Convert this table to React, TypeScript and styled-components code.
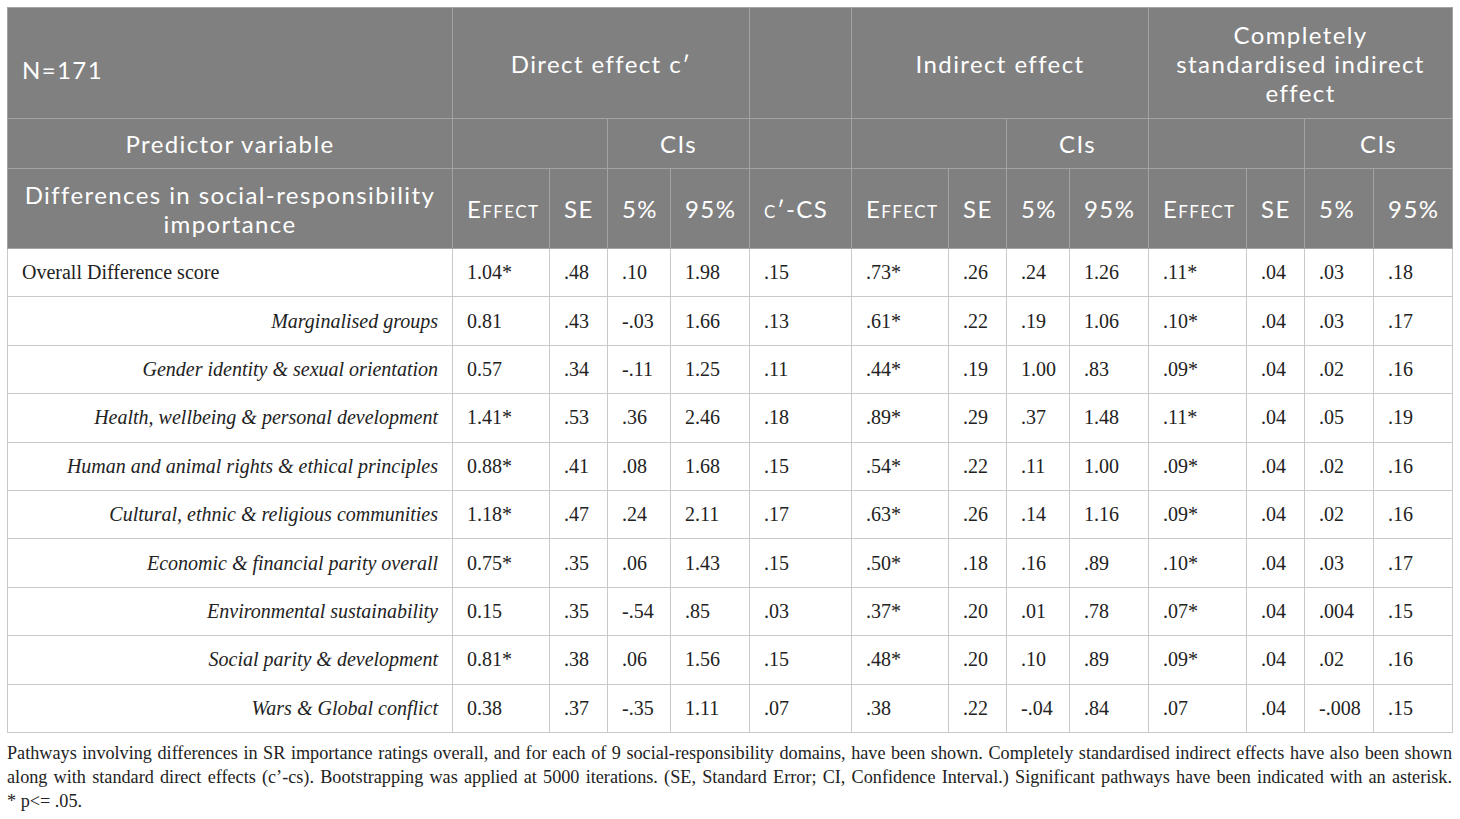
import React from 'react';
import styled, { createGlobalStyle } from 'styled-components';

const GlobalStyle = createGlobalStyle`
  body {
    margin: 0;
    background: #ffffff;
  }
`;

type Row = { label: string; sub: boolean; values: string[] };

const rows: Row[] = [
    { label: 'Overall Difference score', sub: false, values: ['1.04*', '.48', '.10', '1.98', '.15', '.73*', '.26', '.24', '1.26', '.11*', '.04', '.03', '.18'] },
    { label: 'Marginalised groups', sub: true, values: ['0.81', '.43', '-.03', '1.66', '.13', '.61*', '.22', '.19', '1.06', '.10*', '.04', '.03', '.17'] },
    { label: 'Gender identity & sexual orientation', sub: true, values: ['0.57', '.34', '-.11', '1.25', '.11', '.44*', '.19', '1.00', '.83', '.09*', '.04', '.02', '.16'] },
    { label: 'Health, wellbeing & personal development', sub: true, values: ['1.41*', '.53', '.36', '2.46', '.18', '.89*', '.29', '.37', '1.48', '.11*', '.04', '.05', '.19'] },
    { label: 'Human and animal rights & ethical principles', sub: true, values: ['0.88*', '.41', '.08', '1.68', '.15', '.54*', '.22', '.11', '1.00', '.09*', '.04', '.02', '.16'] },
    { label: 'Cultural, ethnic & religious communities', sub: true, values: ['1.18*', '.47', '.24', '2.11', '.17', '.63*', '.26', '.14', '1.16', '.09*', '.04', '.02', '.16'] },
    { label: 'Economic & financial parity overall', sub: true, values: ['0.75*', '.35', '.06', '1.43', '.15', '.50*', '.18', '.16', '.89', '.10*', '.04', '.03', '.17'] },
    { label: 'Environmental sustainability', sub: true, values: ['0.15', '.35', '-.54', '.85', '.03', '.37*', '.20', '.01', '.78', '.07*', '.04', '.004', '.15'] },
    { label: 'Social parity & development', sub: true, values: ['0.81*', '.38', '.06', '1.56', '.15', '.48*', '.20', '.10', '.89', '.09*', '.04', '.02', '.16'] },
    { label: 'Wars & Global conflict', sub: true, values: ['0.38', '.37', '-.35', '1.11', '.07', '.38', '.22', '-.04', '.84', '.07', '.04', '-.008', '.15'] },
];

const colWidths = [445, 97, 58, 63, 79, 102, 97, 58, 63, 79, 98, 58, 69, 79];

export default function App() {
    return (
        <>
            <GlobalStyle />
            <Page>
                <Table>
                    <colgroup>
                        {colWidths.map((w, i) => (
                            <col key={i} style={{ width: w }} />
                        ))}
                    </colgroup>
                    <thead>
                        <HeadRow $height={111}>
                            <HeadCell $align={'left'} $top={13}>N=171</HeadCell>
                            <HeadCell colSpan={4}>Direct effect c′</HeadCell>
                            <HeadCell />
                            <HeadCell colSpan={4}>Indirect effect</HeadCell>
                            <HeadCell colSpan={4} $pad={20}>Completely standardised indirect effect</HeadCell>
                        </HeadRow>
                        <HeadRow $height={50}>
                            <HeadCell>Predictor variable</HeadCell>
                            <HeadCell colSpan={2} />
                            <HeadCell colSpan={2}>CIs</HeadCell>
                            <HeadCell />
                            <HeadCell colSpan={2} />
                            <HeadCell colSpan={2}>CIs</HeadCell>
                            <HeadCell colSpan={2} />
                            <HeadCell colSpan={2}>CIs</HeadCell>
                        </HeadRow>
                        <HeadRow $height={80}>
                            <HeadCell $pad={8}>Differences in social-responsibility importance</HeadCell>
                            <HeadCell $align={'left'}><SmallCaps>Effect</SmallCaps></HeadCell>
                            <HeadCell $align={'left'}>SE</HeadCell>
                            <HeadCell $align={'left'}>5%</HeadCell>
                            <HeadCell $align={'left'}>95%</HeadCell>
                            <HeadCell $align={'left'}><SmallCaps>c′</SmallCaps>-CS</HeadCell>
                            <HeadCell $align={'left'}><SmallCaps>Effect</SmallCaps></HeadCell>
                            <HeadCell $align={'left'}>SE</HeadCell>
                            <HeadCell $align={'left'}>5%</HeadCell>
                            <HeadCell $align={'left'}>95%</HeadCell>
                            <HeadCell $align={'left'}><SmallCaps>Effect</SmallCaps></HeadCell>
                            <HeadCell $align={'left'}>SE</HeadCell>
                            <HeadCell $align={'left'}>5%</HeadCell>
                            <HeadCell $align={'left'}>95%</HeadCell>
                        </HeadRow>
                    </thead>
                    <tbody>
                        {rows.map((r) => (
                            <BodyRow key={r.label}>
                                <LabelCell $sub={r.sub}>{r.label}</LabelCell>
                                {r.values.map((v, i) => (
                                    <Cell key={i}>{v}</Cell>
                                ))}
                            </BodyRow>
                        ))}
                    </tbody>
                </Table>
                <Note>
                    Pathways involving differences in SR importance ratings overall, and for each of 9 social-responsibility domains, have been shown. Completely standardised indirect effects have also been shown along with standard direct effects (c’-cs). Bootstrapping was applied at 5000 iterations. (SE, Standard Error; CI, Confidence Interval.) Significant pathways have been indicated with an asterisk.
                </Note>
                <Footnote>* p&lt;= .05.</Footnote>
            </Page>
        </>
    );
}

const Page = styled.div`
  padding: 7px 8px 0 7px;
  width: 1445px;
`

const Table = styled.table`
  width: 1445px;
  table-layout: fixed;
  border-collapse: collapse;
  border: 1px solid #c9c9c9;
`

const HeadRow = styled.tr<{ $height: number }>`
  height: ${(p) => p.$height}px;
  background: #7f807f;
`

const HeadCell = styled.th<{ $align?: string; $pad?: number; $top?: number }>`
  border: 1px solid #a3a3a3;
  padding: ${(p) => p.$top ?? 0}px ${(p) => p.$pad ?? 14}px 0;
  color: #ffffff;
  font-family: "Lato", "Open Sans", sans-serif;
  font-size: 24px;
  font-weight: 400;
  letter-spacing: 1.4px;
  line-height: 29px;
  text-align: ${(p) => p.$align ?? 'center'};
  vertical-align: middle;
`

const SmallCaps = styled.span`
  font-variant: small-caps;
`

const BodyRow = styled.tr`
  height: 48.4px;
`

const Cell = styled.td`
  border: 1px solid #c9c9c9;
  padding: 0 14px;
  color: #222222;
  font-family: "Liberation Serif", "Times New Roman", serif;
  font-size: 20px;
  white-space: nowrap;
  vertical-align: middle;
`

const LabelCell = styled(Cell)<{ $sub: boolean }>`
  font-style: ${(p) => (p.$sub ? 'italic' : 'normal')};
  text-align: ${(p) => (p.$sub ? 'right' : 'left')};
`

const Note = styled.p`
  margin: 8px 0 0;
  color: #222222;
  font-family: "Liberation Serif", "Times New Roman", serif;
  font-size: 18.2px;
  line-height: 24px;
  text-align: justify;
  text-align-last: justify;
`

const Footnote = styled.p`
  margin: 0;
  color: #222222;
  font-family: "Liberation Serif", "Times New Roman", serif;
  font-size: 18.2px;
  line-height: 24px;
`
